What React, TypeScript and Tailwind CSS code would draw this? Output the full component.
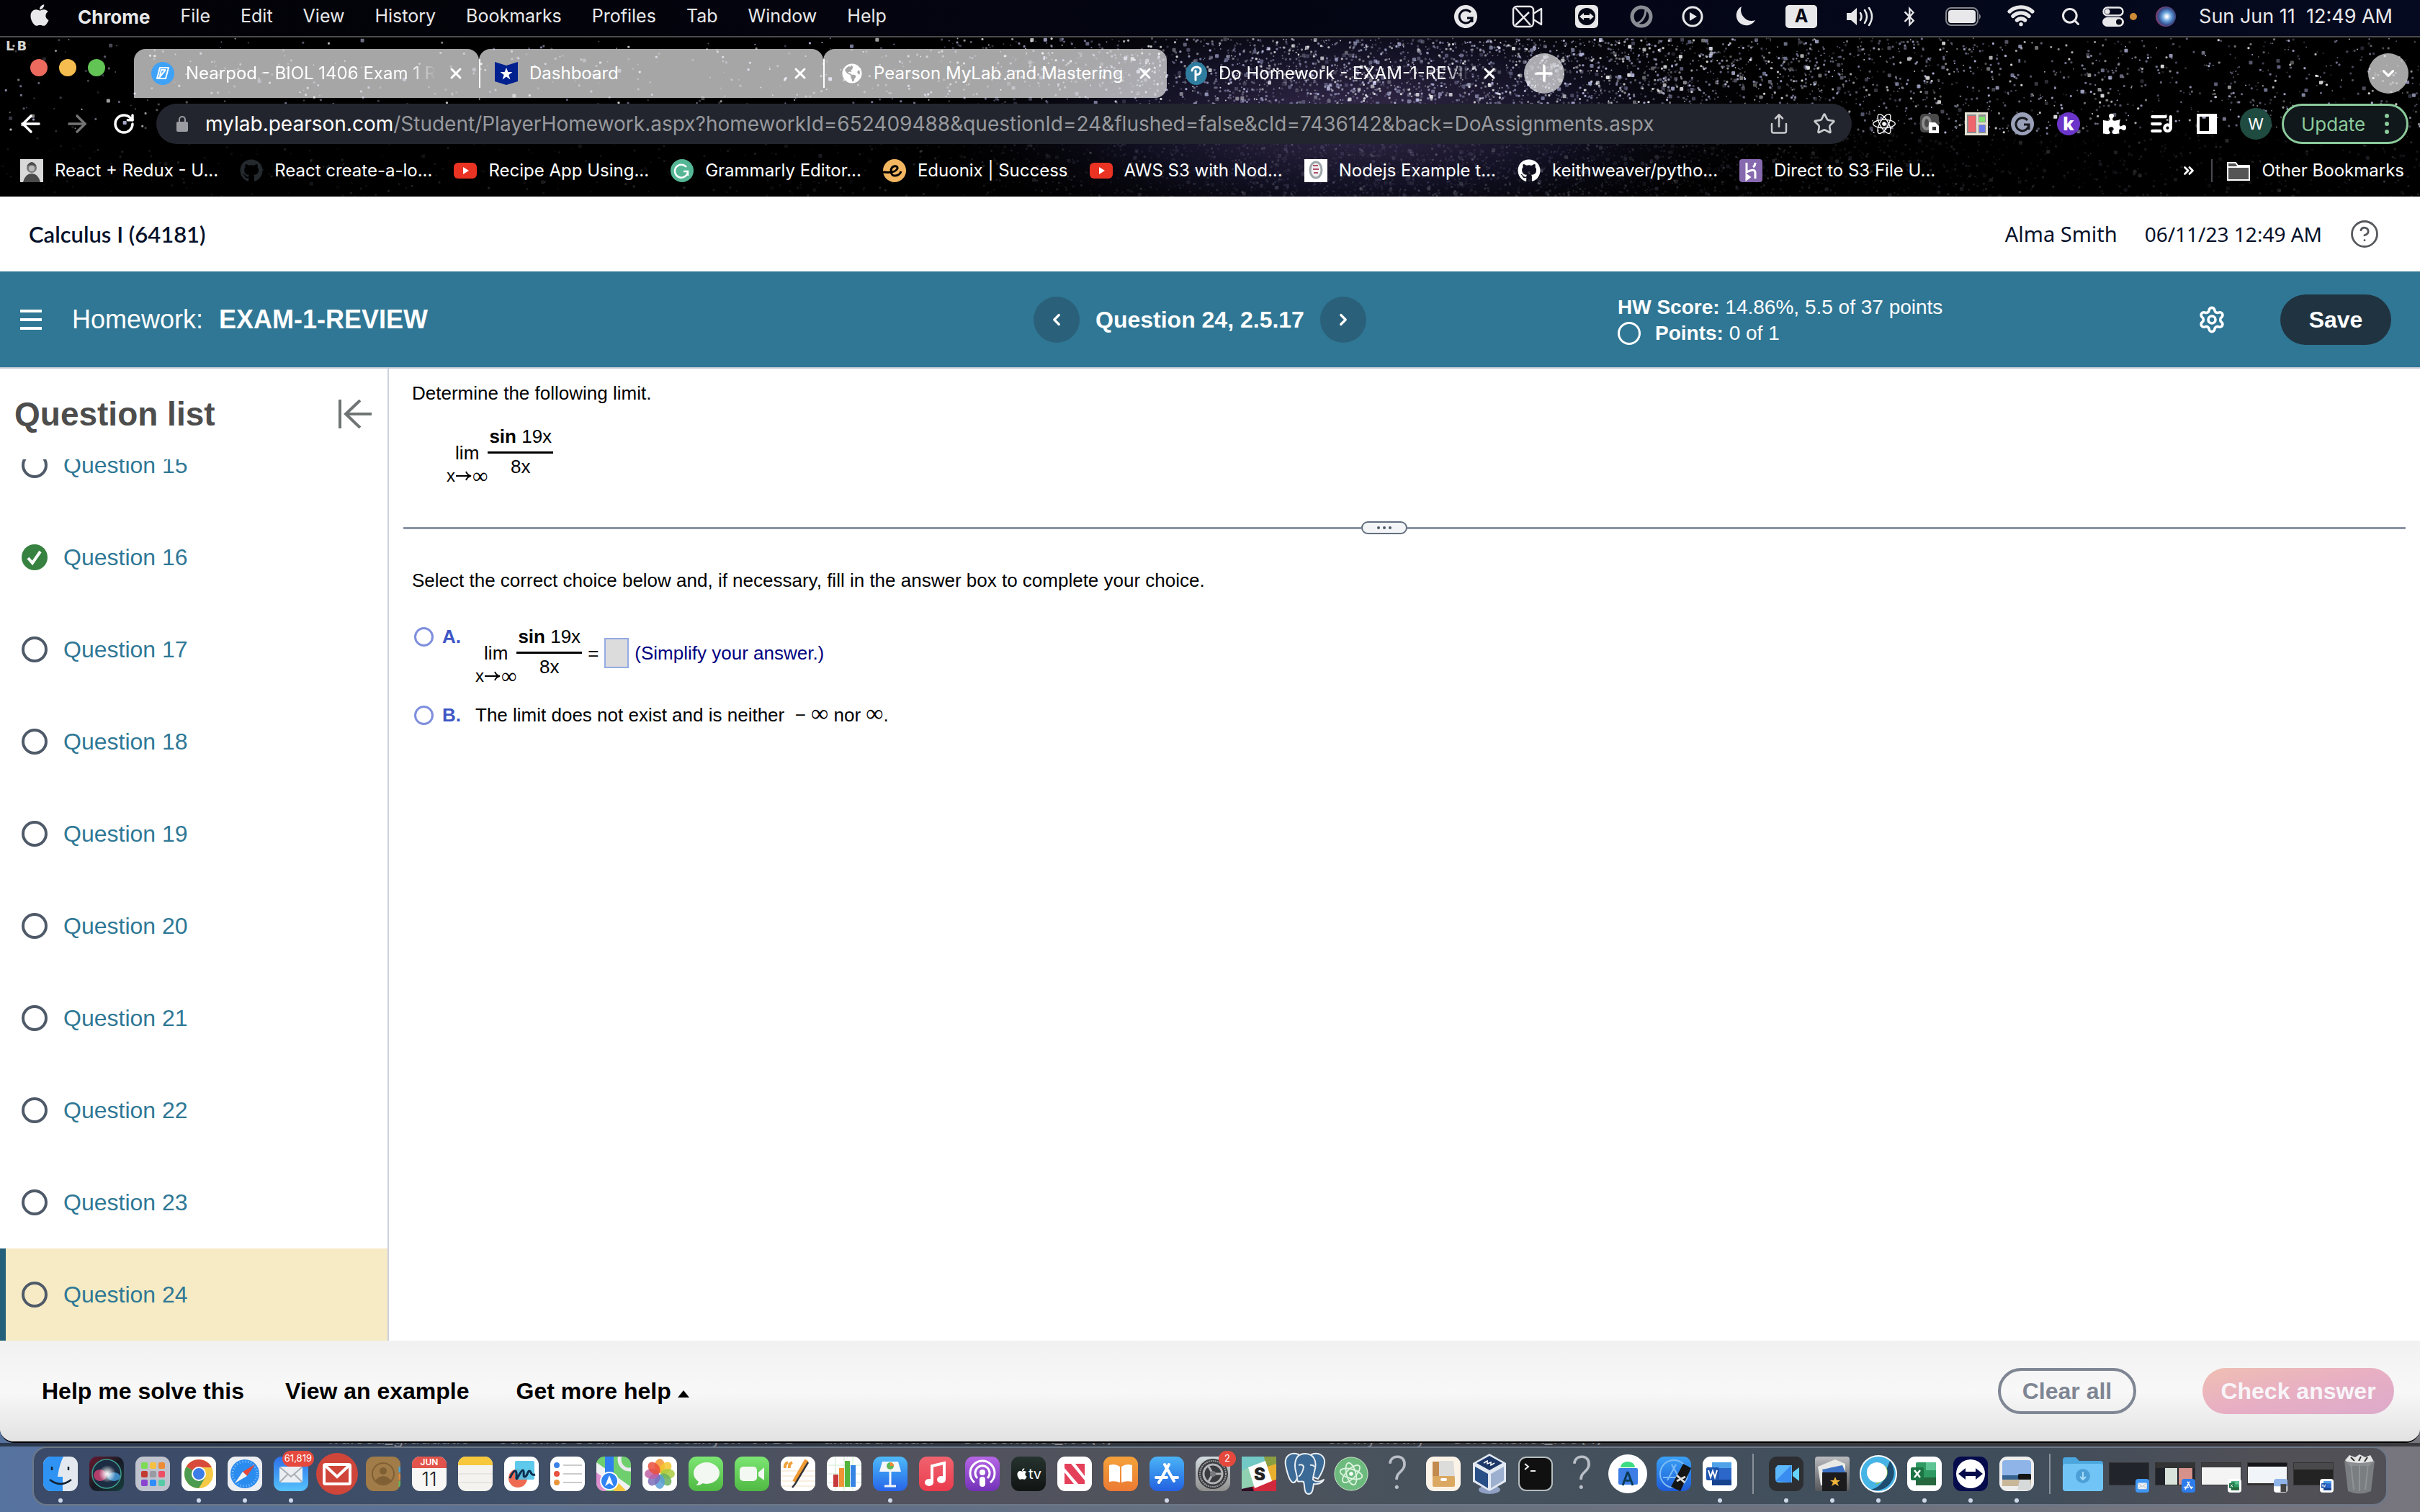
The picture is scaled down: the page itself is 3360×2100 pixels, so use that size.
import React from "react";
import {
  FaApple,
  FaBluetoothB,
  FaGithub,
  FaGlobeAmericas,
  FaPuzzlePiece,
  FaReact,
} from "react-icons/fa";
import {
  ArrowLeft,
  ArrowRight,
  ChevronDown,
  ChevronLeft,
  ChevronRight,
  ChevronsRight,
  CircleHelp,
  CirclePlay,
  ListMusic,
  Plus,
  RotateCw,
  Search,
  Settings,
  Share,
  Star,
  Wifi,
  X,
} from "lucide-react";

const seeded = (seed: number) => () => {
  seed = (seed * 16807) % 2147483647;
  return seed / 2147483647;
};

const rand = seeded(4217);
const gauss = () => (rand() + rand() + rand()) / 3;

const starX = (i: number) => {
  if (i % 5 === 0) return rand() * 100;
  if (i % 5 === 1) return 50 + rand() * 50;
  return 28 + gauss() * 64;
};

const stars = Array.from({ length: 8500 }, (_, i) => {
  const y = rand() * 100;
  const lower = y > 60;
  return {
    x: starX(i),
    y,
    size: rand() > 0.92 ? 5 : rand() > 0.4 ? 3 : 2,
    fill: ["#ffffff", "#c9ccf5", "#9092b8", "#77778a"][Math.floor(rand() * 4)],
    opacity: (lower ? 0.16 : 0.85) * (0.3 + rand() * 0.7),
  };
});

const Starfield = () => (
  <svg className="absolute inset-0 w-full h-full" aria-hidden="true">
    <defs>
      <radialGradient id="milky">
        <stop offset="0" stopColor="#4a3a68" stopOpacity="0.75" />
        <stop offset="0.5" stopColor="#1a1834" stopOpacity="0.65" />
        <stop offset="1" stopColor="#000000" stopOpacity="0" />
      </radialGradient>
    </defs>
    <ellipse cx="56%" cy="50%" rx="19%" ry="90%" fill="url(#milky)" />
    {stars.map((s, i) => (
      <rect
        key={i}
        x={`${s.x.toFixed(2)}%`}
        y={`${s.y.toFixed(2)}%`}
        width={s.size}
        height={s.size}
        rx="1"
        fill={s.fill}
        opacity={s.opacity.toFixed(2)}
      />
    ))}
  </svg>
);

/* ---------- macOS menu bar ---------- */

const menus = ["File", "Edit", "View", "History", "Bookmarks", "Profiles", "Tab", "Window", "Help"];

const MenuBar = () => (
  <header className="flex items-center justify-between h-[50px] pb-1 pl-[38px] pr-[38px] bg-linear-to-r from-[#020206] to-[#050a20] text-[#e8e8ea] text-[25px] shrink-0">
    <nav className="flex items-center gap-[42px]">
      <FaApple size={34} className="-mt-1 mr-[-6px]" />
      <button className="text-[26px] font-bold">Chrome</button>
      {menus.map((m) => (
        <button key={m}>{m}</button>
      ))}
    </nav>
    <div className="flex items-center gap-10">
      <span className="flex items-center justify-center w-8 h-8 mr-2 rounded-full bg-[#e8e8ea]">
        <svg width="24" height="24" viewBox="0 0 24 24" fill="none" stroke="#050816" strokeWidth="3">
          <path d="M19 6a9 9 0 1 0 2 8h-7M21 14v6" />
        </svg>
      </span>
      <svg width="44" height="32" viewBox="0 0 44 32" fill="none" stroke="#e8e8ea" strokeWidth="2.500" strokeLinejoin="round">
        <rect x="2" y="2" width="28" height="28" rx="5" />
        <path d="M30 12l11-7v22l-11-7M5 4l21 24M5 28L24 10" />
      </svg>
      <svg width="32" height="32" viewBox="0 0 32 32" className="ml-1">
        <rect width="32" height="32" rx="6" fill="#e8e8ea" />
        <circle cx="16" cy="16" r="12" fill="#050816" />
        <path d="M6 16l6-5v3h8v-3l6 5-6 5v-3h-8v3z" fill="#e8e8ea" />
      </svg>
      <svg width="32" height="32" viewBox="0 0 32 32" fill="none" stroke="#8b8d94" className="ml-1">
        <circle cx="16" cy="16" r="13" strokeWidth="5" />
        <path d="M9 26c8-3 13-10 13-21" strokeWidth="3" />
      </svg>
      <svg width="30" height="30" viewBox="0 0 30 30">
        <circle cx="15" cy="15" r="13" fill="none" stroke="#e8e8ea" strokeWidth="3" />
        <path d="M11 9l10 6-10 6z" fill="#e8e8ea" />
      </svg>
      <svg width="30" height="30" viewBox="0 0 30 30" className="ml-1">
        <path d="M9 1a14 14 0 1 0 19 19A15 15 0 0 1 9 1z" fill="#e8e8ea" />
      </svg>
      <span className="flex items-center justify-center w-11 h-8 rounded-[5px] bg-[#e8e8ea] text-[#050816] font-bold">A</span>
      <svg width="40" height="32" viewBox="0 0 40 32" fill="none" stroke="#e8e8ea" strokeWidth="2.500" strokeLinecap="round" className="mr-[-4px]">
        <path d="M1 11h6l8-7v24l-8-7H1z" fill="#e8e8ea" stroke="none" />
        <path d="M20 11q3 5 0 10M26 7q6 9 0 18M32 4q8 12 0 24" />
      </svg>
      <FaBluetoothB size={28} className="ml-[-2px] mr-[-4px]" />
      <svg width="50" height="26" viewBox="0 0 50 26" className="mr-[-4px]">
        <rect x="1" y="1" width="44" height="24" rx="7" fill="none" stroke="#84868d" strokeWidth="2" />
        <rect x="4" y="4" width="38" height="18" rx="4" fill="#e8e8ea" />
        <path d="M47 9q4 4 0 8z" fill="#84868d" />
      </svg>
      <Wifi size={38} strokeWidth={3.4} className="-mt-1 mr-[-4px]" />
      <Search size={28} strokeWidth={2.6} className="mr-[-10px]" />
      <div className="flex items-center gap-2">
        <svg width="30" height="28" viewBox="0 0 30 28">
          <rect x="1.500" y="1.500" width="27" height="11" rx="5.500" fill="none" stroke="#e8e8ea" strokeWidth="2.500" />
          <circle cx="7" cy="7" r="3.500" fill="#e8e8ea" />
          <rect y="15" width="30" height="13" rx="6.500" fill="#e8e8ea" />
          <circle cx="23" cy="21.500" r="4" fill="#050816" />
        </svg>
        <span className="w-[10px] h-[10px] mr-[-14px] rounded-full bg-[#cf8a36]" />
      </div>
      <span className="w-7 h-7 rounded-full bg-[radial-gradient(circle_at_55%_50%,#ffffff_5%,#6aa3dd_30%,#35508f_55%,#a8345f_80%,#2f8f80)] mr-[-8px]" />
      <time className="whitespace-pre text-[27px]">Sun Jun 11  12:49 AM</time>
    </div>
  </header>
);

/* ---------- browser chrome ---------- */

const Youtube = () => (
  <svg width="32" height="32" viewBox="0 0 32 32">
    <rect y="5" width="32" height="22" rx="6" fill="#ea3323" />
    <path d="M13 11l8 5-8 5z" fill="#fff" />
  </svg>
);

const TabTitle = ({ children, faded }: { children: React.ReactNode; faded?: boolean }) => (
  <span
    className={
      "flex-1 overflow-hidden whitespace-nowrap text-[24px] " +
      (faded ? "mask-[linear-gradient(to_right,black_90%,transparent)]" : "")
    }
  >
    {children}
  </span>
);

const TabStrip = () => (
  <div className="relative flex items-end h-[84px] text-white">
    <div className="absolute left-2 top-1 flex gap-1 font-['DejaVu_Sans',sans-serif] text-[18px] leading-4 font-bold text-[#d5d5d5]">
      <span>L</span>
      <span>B</span>
    </div>
    <div className="flex items-center gap-4 w-[186px] h-[68px] pl-[42px] pb-4">
      <button aria-label="Close window" className="w-6 h-6 rounded-full bg-[#ed6a5e]" />
      <button aria-label="Minimize" className="w-6 h-6 rounded-full bg-[#f5bd4f]" />
      <button aria-label="Zoom" className="w-6 h-6 rounded-full bg-[#61c454]" />
    </div>
    <div className="flex items-center gap-4 w-[479px] h-[68px] pl-6 pr-5 rounded-t-2xl bg-white/65">
      <svg width="32" height="32" viewBox="0 0 32 32">
        <circle cx="16" cy="16" r="16" fill="#3fa2f7" />
        <path d="M12 8h12l-4 15H8zM12 19l2-8h6M10 23l10-12" fill="none" stroke="#fff" strokeWidth="2" strokeLinejoin="round" />
      </svg>
      <TabTitle faded>Nearpod - BIOL 1406 Exam 1 R</TabTitle>
      <button aria-label="Close tab"><X size={24} strokeWidth={3} /></button>
    </div>
    <div className="flex items-center w-[478px] h-[68px] pr-5 rounded-t-2xl bg-white/65">
      <div className="w-[2px] h-10 mr-5 bg-white" />
      <div className="flex items-center gap-4 flex-1">
        <svg width="32" height="32" viewBox="0 0 32 32">
          <path d="M0 0l16 5L32 0v27l-16 5-16-5z" fill="#00208f" />
          <path d="M16 8l2.400 6h6l-5 4 2 6.500-5.400-4-5.400 4 2-6.500-5-4h6z" fill="#fff" />
        </svg>
        <TabTitle>Dashboard</TabTitle>
        <button aria-label="Close tab"><X size={24} strokeWidth={3} /></button>
      </div>
    </div>
    <div className="flex items-center w-[477px] h-[68px] pr-[18px] rounded-t-2xl rounded-br-2xl bg-white/65">
      <div className="w-[2px] h-10 mr-6 bg-white" />
      <div className="flex items-center gap-4 flex-1">
        <FaGlobeAmericas size={28} />
        <TabTitle>Pearson MyLab and Mastering</TabTitle>
        <button aria-label="Close tab"><X size={24} strokeWidth={3} /></button>
      </div>
    </div>
    <div className="flex items-center gap-4 w-[476px] h-[68px] pl-[26px] pr-4">
      <svg width="30" height="32" viewBox="0 0 30 32">
        <ellipse cx="15" cy="16" rx="15" ry="16" fill="#2f7d9f" />
        <path d="M9 12q1-5 7-5 6 1 5 6t-7 5M14 12v13" fill="none" stroke="#fff" strokeWidth="3" strokeLinecap="round" />
      </svg>
      <TabTitle faded>Do Homework - EXAM-1-REVIE</TabTitle>
      <button aria-label="Close tab"><X size={24} strokeWidth={3} /></button>
    </div>
    <div className="flex flex-1 items-center justify-between h-[68px] pl-5 pr-4">
      <button aria-label="New tab" className="flex items-center justify-center w-14 h-14 rounded-full bg-white/65">
        <Plus size={34} strokeWidth={2.6} />
      </button>
      <button aria-label="Search tabs" className="flex items-center justify-center w-14 h-14 rounded-full bg-white/65">
        <ChevronDown size={26} strokeWidth={3} />
      </button>
    </div>
  </div>
);

const Toolbar = () => (
  <div className="relative flex items-center h-[72px] pl-6 pr-4 text-white">
    <div className="flex items-center gap-[26px] w-[193px]">
      <button aria-label="Back"><ArrowLeft size={38} strokeWidth={2.2} /></button>
      <button aria-label="Forward"><ArrowRight size={38} strokeWidth={2.2} className="text-[#747474]" /></button>
      <button aria-label="Reload" className="ml-1"><RotateCw size={32} strokeWidth={2.6} /></button>
    </div>
    <div className="flex flex-1 items-center h-14 pl-7 pr-[22px] rounded-full bg-[#22252d]">
      <svg width="16" height="22" viewBox="0 0 16 22" className="mr-6">
        <rect y="8" width="16" height="14" rx="2" fill="#9a9ca1" />
        <path d="M4 9V5a4 4 0 0 1 8 0v4" fill="none" stroke="#9a9ca1" strokeWidth="2" />
      </svg>
      <div className="flex-1 text-[28px] whitespace-nowrap text-[#97999e]">
        <span className="text-white">mylab.pearson.com</span>
        /Student/PlayerHomework.aspx?homeworkId=652409488&questionId=24&flushed=false&cId=7436142&back=DoAssignments.aspx
      </div>
      <div className="flex gap-8 text-[#c9cacd]">
        <button aria-label="Share"><Share size={30} strokeWidth={2} /></button>
        <button aria-label="Bookmark"><Star size={32} strokeWidth={2} /></button>
      </div>
    </div>
    <div className="flex items-center gap-8 pl-[29px]">
      <FaReact size={32} />
      <svg width="32" height="32" viewBox="0 0 32 32">
        <rect x="2" y="2" width="26" height="26" rx="5" fill="#4a4a4a" />
        <ellipse cx="11" cy="15" rx="5" ry="8" fill="none" stroke="#8b8b8b" strokeWidth="4" />
        <path d="M14 14h9l5 5v10H14z" fill="#fff" />
        <rect x="19" y="20" width="5" height="5" fill="#333" />
      </svg>
      <svg width="32" height="32" viewBox="0 0 32 32">
        <rect width="32" height="32" fill="#e4e1d4" />
        <rect x="3" y="3" width="26" height="26" fill="#8d8d8d" />
        <rect x="5" y="5" width="10" height="22" fill="#f0656c" />
        <path d="M16 2h3v28h-3zM17 14h13v3H17z" fill="#e4e1d4" />
        <rect x="20" y="6" width="8" height="7" fill="#7ee36b" />
        <rect x="20" y="18" width="8" height="9" fill="#6b78ee" />
      </svg>
      <svg width="32" height="32" viewBox="0 0 32 32">
        <circle cx="16" cy="16" r="16" fill="#9aa0b8" />
        <path d="M23 11a9 9 0 1 0 2 6h-7M25 17v7" fill="none" stroke="#15171d" strokeWidth="3" />
      </svg>
      <span className="flex items-center justify-center w-8 h-8 rounded-full bg-[#6b35c9] text-[26px] leading-8 font-extrabold">k</span>
      <FaPuzzlePiece size={32} />
      <ListMusic size={34} strokeWidth={3} />
      <svg width="28" height="28" viewBox="0 0 28 28">
        <path d="M0 0h28v28H0zM4 4v20h13V4z" fill="#fff" fillRule="evenodd" />
      </svg>
      <span className="flex items-center justify-center w-11 h-11 rounded-full bg-[#1f4b41] text-[22px]">W</span>
      <button className="flex items-center justify-between w-44 h-14 px-6 ml-[-18px] border-[3px] border-[#8cca9b] rounded-full bg-[#10181b] text-[26px] text-[#8cca9b]">
        Update
        <svg width="6" height="28" viewBox="0 0 6 28" fill="#8cca9b">
          <circle cx="3" cy="3" r="3" />
          <circle cx="3" cy="14" r="3" />
          <circle cx="3" cy="25" r="3" />
        </svg>
      </button>
    </div>
  </div>
);

const bookmarks = [
  {
    label: "React + Redux - U...",
    icon: (
      <svg width="32" height="32" viewBox="0 0 32 32">
        <rect width="32" height="32" fill="#d9d9d9" />
        <circle cx="16" cy="12" r="7" fill="#777" />
        <path d="M9 10q7-12 14 0-7-4-14 0zM4 32q3-12 12-12t12 12z" fill="#4b4b4b" />
        <circle cx="16" cy="13" r="4" fill="#b9b9b9" />
      </svg>
    ),
  },
  { label: "React create-a-lo...", icon: <FaGithub size={32} className="text-[#24292e]" /> },
  { label: "Recipe App Using...", icon: <Youtube /> },
  {
    label: "Grammarly Editor...",
    icon: (
      <svg width="32" height="32" viewBox="0 0 32 32">
        <circle cx="16" cy="16" r="16" fill="#54b694" />
        <path d="M22 11a9 9 0 1 0 2 6h-6M24 17v6" fill="none" stroke="#fff" strokeWidth="2.500" />
      </svg>
    ),
  },
  {
    label: "Eduonix | Success",
    icon: (
      <svg width="32" height="32" viewBox="0 0 32 32">
        <circle cx="16" cy="16" r="16" fill="#f3b661" />
        <path d="M0 18q17 2 20-5c1-5-9-5-9 4 0 9 12 7 14 0" fill="none" stroke="#000" strokeWidth="3" />
      </svg>
    ),
  },
  { label: "AWS S3 with Nod...", icon: <Youtube /> },
  {
    label: "Nodejs Example t...",
    icon: (
      <svg width="32" height="32" viewBox="0 0 32 32">
        <rect width="32" height="32" fill="#fff" />
        <ellipse cx="16" cy="15" rx="8" ry="11" fill="#f0f0f2" stroke="#9fa6a9" strokeWidth="3" />
        <path d="M12 9h7M12 14h8M13 19h6" stroke="#b05068" strokeWidth="2" />
      </svg>
    ),
  },
  { label: "keithweaver/pytho...", icon: <FaGithub size={32} /> },
  {
    label: "Direct to S3 File U...",
    icon: (
      <svg width="32" height="32" viewBox="0 0 32 32">
        <rect width="32" height="32" rx="4" fill="#8769b0" />
        <path d="M10 5v13q12-6 12 1v8M22 5q0 4-3 6M10 22v6l4-3z" fill="none" stroke="#fff" strokeWidth="3" />
      </svg>
    ),
  },
];

const BookmarksBar = () => (
  <nav className="relative flex items-center justify-between h-[65px] pb-2 pl-7 pr-[22px] text-white text-[24px]">
    <div className="flex items-center gap-[30px]">
      {bookmarks.map((b) => (
        <a key={b.label} href="#" className="flex items-center gap-4 whitespace-nowrap">
          {b.icon}
          {b.label}
        </a>
      ))}
    </div>
    <div className="flex items-center gap-5">
      <button aria-label="More bookmarks"><ChevronsRight size={22} strokeWidth={3} /></button>
      <div className="w-[2px] h-8 bg-[#4b4b4f]" />
      <a href="#" className="flex items-center gap-4">
        <svg width="32" height="28" viewBox="0 0 32 28">
          <path d="M1 3h11l3 4h16v20H1z" fill="#555" stroke="#fff" strokeWidth="2" />
          <path d="M1 9h30" stroke="#fff" strokeWidth="2" />
        </svg>
        Other Bookmarks
      </a>
    </div>
  </nav>
);

/* ---------- homework player ---------- */

const Infinity = () => <span className="font-['Liberation_Serif',serif] text-[34px] leading-6">∞</span>;

const Limit = () => (
  <span className="inline-flex items-start">
    <span className="flex flex-col items-center pt-[25px] leading-7">
      <span>lim</span>
      <span className="flex items-center mt-1 text-[24px]">
        x
        <svg width="24" height="14" viewBox="0 0 24 14" fill="none" stroke="#000" strokeWidth="2">
          <path d="M1 7h20M15 1q2 5 7 6-5 1-7 6" />
        </svg>
        <span className="font-['Liberation_Serif',serif] text-[30px]">∞</span>
      </span>
    </span>
    <span className="flex flex-col items-center">
      <span className="px-[2px] pb-[5px] border-b-3 border-black leading-8">
        <b>sin</b> 19x
      </span>
      <span className="pt-[2px] leading-8">8x</span>
    </span>
  </span>
);

const questions = [15, 16, 17, 18, 19, 20, 21, 22, 23, 24];

const QuestionList = () => (
  <aside className="flex flex-col w-[540px] shrink-0 border-r-2 border-[#ced0de]">
    <div className="flex items-center justify-between h-[126px] shrink-0 pl-5 pr-[22px]">
      <h2 className="text-[46px] leading-[56px] font-bold text-[#4d4d4d]">Question list</h2>
      <button aria-label="Collapse question list">
        <svg width="46" height="40" viewBox="0 0 46 40" fill="none" stroke="#6f7474" strokeWidth="4">
          <path d="M2 0v40M46 20H10M30 1L10 20l20 19" />
        </svg>
      </button>
    </div>
    <ul className="flex flex-col flex-1 justify-end min-h-0 overflow-hidden">
      {questions.map((q) => (
        <li
          key={q}
          className={
            "flex items-center h-32 shrink-0 border-l-8 pl-[22px] " +
            (q === 24 ? "border-[#25607b] bg-[#f6ebc4]" : "border-transparent")
          }
        >
          <a href="#" className="flex items-center gap-[22px] text-[32px] text-[#2f7896]">
            {q === 16 ? (
              <svg width="36" height="36" viewBox="0 0 36 36">
                <circle cx="18" cy="18" r="18" fill="#378240" />
                <path d="M9 19l6 7 11-16" fill="none" stroke="#fff" strokeWidth="4" />
              </svg>
            ) : (
              <span className="w-9 h-9 border-4 border-[#4f5a69] rounded-full" />
            )}
            Question {q}
          </a>
        </li>
      ))}
    </ul>
  </aside>
);

const Radio = ({ letter }: { letter: string }) => (
  <label className="flex items-center gap-3 w-[88px] h-8 pl-[3px] font-bold text-[#3d56c5]">
    <input
      type="radio"
      name="choice"
      className="appearance-none w-[27px] h-[27px] border-[3px] border-[#7f8fdd] rounded-full bg-white"
    />
    {letter}.
  </label>
);

const Exercise = () => (
  <main className="flex-1 px-5 pt-[18px] text-[26px] leading-8 text-black">
    <div className="h-[194px] pl-3">
      <p>Determine the following limit.</p>
      <div className="pl-12 pt-7">
        <Limit />
      </div>
    </div>
    <div className="flex items-center h-[18px]">
      <div className="flex-[24] h-[3px] bg-[#8b93a5]" />
      <button aria-label="Resize panes" className="flex items-center justify-center gap-1 w-[64px] h-[18px] border-2 border-[#62707f] rounded-full bg-[#f4f5f7]">
        <span className="w-1 h-1 rounded-full bg-[#4d5a68]" />
        <span className="w-1 h-1 rounded-full bg-[#4d5a68]" />
        <span className="w-1 h-1 rounded-full bg-[#4d5a68]" />
      </button>
      <div className="flex-[25] h-[3px] bg-[#8b93a5]" />
    </div>
    <div className="pl-3 pt-12">
      <p>Select the correct choice below and, if necessary, fill in the answer box to complete your choice.</p>
      <div className="flex items-start pt-[46px]">
        <Radio letter="A" />
        <div className="flex items-start">
          <Limit />
          <div className="flex items-center h-[78px] gap-2 pl-2">
            <span>=</span>
            <input
              aria-label="Answer"
              readOnly
              className="w-[34px] h-[42px] border-2 border-[#94abe2] bg-[#dcdcdc]"
            />
            <span className="text-[#000080]">(Simplify your answer.)</span>
          </div>
        </div>
      </div>
      <div className="flex items-center pt-6">
        <Radio letter="B" />
        <p className="whitespace-pre">
          The limit does not exist and is neither  − <Infinity /> nor <Infinity />.
        </p>
      </div>
    </div>
  </main>
);

const CourseHeader = () => (
  <div className="flex items-center justify-between h-[104px] shrink-0 pl-10 pr-14 bg-white text-[#05112a]">
    <h1 className="font-['Lato',sans-serif] text-[31px] font-semibold">Calculus I (64181)</h1>
    <div className="flex items-center gap-[38px] font-['Noto_Sans',sans-serif] text-[29px]">
      <span>Alma Smith</span>
      <span className="text-[28px]">06/11/23 12:49 AM</span>
      <button aria-label="Help"><CircleHelp size={42} strokeWidth={1.6} className="text-[#55585c]" /></button>
    </div>
  </div>
);

const AssignmentBar = () => (
  <div className="grid grid-cols-[1435px_811px_1fr] items-center h-[135px] shrink-0 border-b-2 border-[#c8cbd8] bg-[#307795] text-white">
    <div className="flex items-center pl-7 text-[36px]">
      <button aria-label="Menu" className="flex flex-col gap-2 w-[30px] mr-[42px]">
        <span className="h-1 w-full bg-white" />
        <span className="h-1 w-full bg-white" />
        <span className="h-1 w-full bg-white" />
      </button>
      Homework:<b className="ml-[22px]">EXAM-1-REVIEW</b>
    </div>
    <div className="flex items-center gap-[22px]">
      <button aria-label="Previous question" className="flex items-center justify-center w-16 h-16 rounded-full bg-[#2a6079]">
        <ChevronLeft size={26} strokeWidth={3} />
      </button>
      <b className="text-[32px]">Question 24, 2.5.17</b>
      <button aria-label="Next question" className="flex items-center justify-center w-16 h-16 rounded-full bg-[#2a6079]">
        <ChevronRight size={26} strokeWidth={3} />
      </button>
    </div>
    <div className="flex items-center justify-between pr-10">
      <div className="text-[28px] leading-9 pt-[2px]">
        <p><b>HW Score:</b> 14.86%, 5.5 of 37 points</p>
        <p className="flex items-center">
          <span className="w-8 h-8 mr-5 border-[3px] border-white rounded-full" />
          <span><b>Points:</b> 0 of 1</span>
        </p>
      </div>
      <div className="flex items-center gap-[75px]">
        <button aria-label="Settings"><Settings size={40} strokeWidth={2.2} /></button>
        <button className="w-[154px] h-[70px] rounded-full bg-[#203341] text-[32px] font-bold">Save</button>
      </div>
    </div>
  </div>
);

const ActionBar = () => (
  <footer className="flex items-center justify-between h-[140px] shrink-0 pl-[58px] pr-9 bg-linear-to-b from-[#f1f1f1] via-[#f8f8f8] to-[#e2e2e2] text-[32px] font-bold text-black">
    <div className="flex items-center">
      <button className="mr-[57px]">Help me solve this</button>
      <button className="mr-[65px]">View an example</button>
      <button className="flex items-center gap-[9px]">
        Get more help
        <svg width="16" height="10" viewBox="0 0 16 10" className="mt-2"><path d="M0 10L8 0l8 10z" /></svg>
      </button>
    </div>
    <div className="flex items-center gap-[92px]">
      <button className="w-48 h-16 border-4 border-[#7f8693] rounded-full text-[#7f8693]">Clear all</button>
      <button className="w-[266px] h-16 rounded-full bg-linear-to-br from-[#f0bfb2] via-[#e8afc3] to-[#dcaacb] text-[#f8f5f9]">
        Check answer
      </button>
    </div>
  </footer>
);

/* ---------- dock ---------- */

const Tile = ({ children, className = "bg-white" }: { children?: React.ReactNode; className?: string }) => (
  <span className={"flex items-center justify-center w-12 h-12 rounded-[11px] overflow-hidden " + className}>
    {children}
  </span>
);

const Art = ({ children }: { children: React.ReactNode }) => (
  <svg width="48" height="48" viewBox="0 0 48 48" className="shrink-0">
    {children}
  </svg>
);

const Badge = ({ children }: { children: React.ReactNode }) => (
  <span className="absolute right-0 -top-2 flex items-center justify-center min-w-6 h-[22px] px-[3px] rounded-full bg-[#e5493d] text-white text-[13px]">
    {children}
  </span>
);

const Missing = () => (
  <span className="font-['Roboto',sans-serif] text-[64px] leading-[48px] font-light text-[#b9bec6]">?</span>
);

const Thumb = ({ tone, children }: { tone: string; children: React.ReactNode }) => (
  <span className="relative flex w-14 h-12 items-center">
    <span className={"w-14 h-8 border border-[#333] " + tone} />
    <span className="absolute right-0 -bottom-[2px] w-[19px] h-[19px] rounded-[4px] overflow-hidden">{children}</span>
  </span>
);

const launchpadColors = ["#7ddb55", "#f6c042", "#ee8b33", "#c33a33", "#9a9aa2", "#ee4d63", "#8a44cf", "#2f8df7", "#56cba5"];
const petals = ["#f6952d", "#f3c62e", "#a9cb3f", "#68b25f", "#5a9fd8", "#7d6cb8", "#c05fa5", "#ea4f3b"];

const Envelope = () => (
  <g>
    <rect x="8" y="14" width="32" height="22" rx="3" fill="#eceff2" />
    <path d="M9 15l15 13 15-13M9 35l11-11M39 35L28 24" fill="none" stroke="#a9afb5" strokeWidth="2" />
  </g>
);

const AppStoreMark = () => (
  <g stroke="#fff" strokeWidth="4" strokeLinecap="round" fill="none">
    <path d="M27 11L15 33M21 11l13 23M9 29h15M31 29h8M13 36l1-2" />
  </g>
);

const Sheets = () => (
  <g>
    <rect x="12" y="8" width="28" height="32" rx="2" fill="#2f9b63" />
    <path d="M26 8h14v11H26z" fill="#5fc493" />
    <path d="M12 29h28v11H12z" fill="#27683f" />
    <rect x="5" y="15" width="18" height="18" rx="2" fill="#1c7343" />
    <path d="M10 19l8 10M18 19l-8 10" stroke="#fff" strokeWidth="2.500" />
  </g>
);

const WordMark = () => (
  <g>
    <rect x="13" y="8" width="27" height="32" rx="2" fill="#2b67c9" />
    <path d="M13 8h27v8H13z" fill="#4fa2e8" />
    <path d="M13 32h27v8H13z" fill="#17438f" />
    <rect x="5" y="15" width="18" height="18" rx="2" fill="#1d54ad" />
    <path d="M8 19l3 10 3-9 3 9 3-10" fill="none" stroke="#fff" strokeWidth="2" />
  </g>
);

type DockApp = { name: string; icon: React.ReactNode; running?: boolean; badge?: string };

const apps: DockApp[] = [
  {
    name: "Finder",
    running: true,
    icon: (
      <Tile className="bg-[#e4e9f0]">
        <Art>
          <path d="M0 0h28q-6 12-8 28h7v20H0z" fill="#2f93f3" />
          <path d="M12 14v5M35 14v5" stroke="#123" strokeWidth="2.500" />
          <path d="M9 32q15 12 30 0" fill="none" stroke="#123" strokeWidth="2.500" />
        </Art>
      </Tile>
    ),
  },
  {
    name: "Siri",
    icon: (
      <Tile className="bg-linear-to-br from-[#6b1030] via-[#171a24] to-[#123f3d]">
        <Art>
          <defs>
            <radialGradient id="siriGlow">
              <stop offset="0" stopColor="#fff" />
              <stop offset="0.35" stopColor="#fff" stopOpacity="0.7" />
              <stop offset="1" stopColor="#fff" stopOpacity="0" />
            </radialGradient>
          </defs>
          <circle cx="24" cy="24" r="20" fill="#1c2c42" stroke="#3d9c8c" strokeWidth="1.500" />
          <ellipse cx="15" cy="26" rx="9" ry="8" fill="#d64474" opacity=".8" />
          <ellipse cx="34" cy="28" rx="9" ry="6" fill="#47a3e2" opacity=".8" />
          <ellipse cx="25" cy="24" rx="12" ry="12" fill="url(#siriGlow)" />
        </Art>
      </Tile>
    ),
  },
  {
    name: "Launchpad",
    icon: (
      <Tile className="bg-[#bfc3cd]">
        <Art>
          {launchpadColors.map((c, i) => (
            <rect key={c} x={8 + (i % 3) * 12} y={8 + Math.floor(i / 3) * 12} width="9" height="9" rx="2" fill={c} />
          ))}
        </Art>
      </Tile>
    ),
  },
  {
    name: "Chrome",
    running: true,
    icon: (
      <Tile>
        <Art>
          <circle cx="24" cy="24" r="20" fill="#f6c944" />
          <path d="M24 24L6.700 14a20 20 0 0 1 34.600 0L42 15H24z" fill="#d84a3b" />
          <path d="M24 24L6.700 14A20 20 0 0 0 24 44l9-15z" fill="#4c9b51" />
          <circle cx="24" cy="24" r="10" fill="#fff" />
          <circle cx="24" cy="24" r="8" fill="#3d7de8" />
        </Art>
      </Tile>
    ),
  },
  {
    name: "Safari",
    running: true,
    icon: (
      <Tile className="bg-[#eceef1]">
        <Art>
          <circle cx="24" cy="24" r="20" fill="#2b8cf0" />
          <circle cx="24" cy="24" r="17" fill="none" stroke="#8cc4fa" strokeWidth="3" strokeDasharray="1 3" />
          <path d="M38 11L21 21l6 6z" fill="#e5473b" />
          <path d="M10 37l11-16 6 6z" fill="#f2f2f2" />
        </Art>
      </Tile>
    ),
  },
  {
    name: "Mail",
    running: true,
    badge: "61,819",
    icon: <Tile className="bg-linear-to-b from-[#2f6fea] to-[#57c2fb]"><Art><Envelope /></Art></Tile>,
  },
  {
    name: "Gmail",
    icon: (
      <svg width="58" height="58" viewBox="0 0 58 58" className="-mx-[5px] -my-[5px] shrink-0">
        <circle cx="29" cy="29" r="29" fill="#d0453a" />
        <rect x="11" y="16" width="36" height="27" rx="2" fill="none" stroke="#fff" strokeWidth="4" />
        <path d="M13 18l16 15 16-15" fill="none" stroke="#fff" strokeWidth="4" />
      </svg>
    ),
  },
  {
    name: "Contacts",
    icon: (
      <Tile className="bg-[#a17c48]">
        <Art>
          <circle cx="24" cy="24" r="15" fill="none" stroke="#7f5f34" strokeWidth="2" />
          <circle cx="24" cy="20" r="5" fill="#7f5f34" />
          <path d="M13 33q11-12 22 0-11 10-22 0z" fill="#7f5f34" />
          <path d="M47 14v8" stroke="#4aa5d8" strokeWidth="3" />
          <path d="M47 24v8" stroke="#e08a3c" strokeWidth="3" />
          <path d="M47 34v8" stroke="#62b65a" strokeWidth="3" />
        </Art>
      </Tile>
    ),
  },
  {
    name: "Calendar",
    icon: (
      <Tile className="flex-col bg-[#f8f7f5] justify-start!">
        <span className="w-full h-4 bg-[#e2544b] text-center text-[12px] leading-4 font-semibold text-white">JUN</span>
        <span className="text-[27px] leading-8 font-light text-[#222]">11</span>
      </Tile>
    ),
  },
  {
    name: "Notes",
    icon: (
      <Tile className="bg-[#f4f3ef]">
        <Art>
          <path d="M0 0h48v12H0z" fill="#f7c83c" />
          <path d="M0 24h48M0 36h48" stroke="#d8d7d2" />
        </Art>
      </Tile>
    ),
  },
  {
    name: "Freeform",
    icon: (
      <Tile>
        <Art>
          <circle cx="19" cy="30" r="13" fill="#ef6a51" />
          <rect x="15" y="6" width="27" height="26" rx="2" fill="#4cc3e8" opacity=".9" />
          <path d="M8 30c6-14 10-12 9-2s6-10 9-9-1 10 3 9 3-8 6-8 1 7 8 5" fill="none" stroke="#0d2d4d" strokeWidth="3" />
        </Art>
      </Tile>
    ),
  },
  {
    name: "Reminders",
    icon: (
      <Tile>
        <Art>
          <circle cx="9" cy="12" r="4" fill="#3b82e8" />
          <circle cx="9" cy="24" r="4" fill="#e8503f" />
          <circle cx="9" cy="36" r="4" fill="#e9963b" />
          <path d="M18 12h26M18 24h26M18 36h26" stroke="#ccc" strokeWidth="2" />
        </Art>
      </Tile>
    ),
  },
  {
    name: "Maps",
    icon: (
      <Tile className="bg-[#6fce6e]">
        <Art>
          <path d="M0 18l14 10v20H0z" fill="#dd8fd0" />
          <path d="M0 8l48 34v6H36L0 22z" fill="#f1f2f4" />
          <path d="M26 32l16 16H24z" fill="#f4c63e" />
          <circle cx="46" cy="4" r="14" fill="none" stroke="#e8e9ec" strokeWidth="5" />
          <path d="M12 0h12v26H12z" fill="#2f7fee" />
          <circle cx="18" cy="34" r="12" fill="#2f83f4" stroke="#fff" strokeWidth="2" />
          <path d="M18 26l6 15-6-4-6 4z" fill="#fff" />
        </Art>
      </Tile>
    ),
  },
  {
    name: "Photos",
    icon: (
      <Tile>
        <Art>
          {petals.map((c, i) => (
            <ellipse key={c} cx="24" cy="13" rx="7" ry="10" fill={c} opacity=".85" transform={`rotate(${i * 45} 24 24)`} />
          ))}
        </Art>
      </Tile>
    ),
  },
  {
    name: "Messages",
    icon: (
      <Tile className="bg-linear-to-b from-[#7ce672] to-[#4fb943]">
        <Art>
          <ellipse cx="25" cy="23" rx="18" ry="15" fill="#f3f8f2" />
          <path d="M14 33q0 5-4 7 7 0 11-4z" fill="#f3f8f2" />
        </Art>
      </Tile>
    ),
  },
  {
    name: "FaceTime",
    icon: (
      <Tile className="bg-linear-to-b from-[#7ce672] to-[#4fb943]">
        <Art>
          <rect x="7" y="14" width="24" height="20" rx="5" fill="#f3f8f2" />
          <path d="M33 22l8-7v18l-8-6z" fill="#f3f8f2" />
        </Art>
      </Tile>
    ),
  },
  {
    name: "Pages",
    icon: (
      <Tile>
        <Art>
          <path d="M0 20h48M0 27h48M0 34h48M0 41h48" stroke="#f5dfc3" />
          <path d="M6 16q-1-6 4-8M12 16q-1-6 4-8" fill="none" stroke="#f0a13b" strokeWidth="4" />
          <path d="M36 5L19 35" stroke="#ef9a33" strokeWidth="6" />
          <path d="M38 8L20 38l-4 5" fill="none" stroke="#33363b" strokeWidth="2.500" />
        </Art>
      </Tile>
    ),
  },
  {
    name: "Numbers",
    icon: (
      <Tile>
        <Art>
          <path d="M0 12h48M0 24h48M0 36h48M12 0v48M24 0v48M36 0v48" stroke="#cdeacb" />
          <rect x="9" y="25" width="7" height="17" fill="#c8393b" />
          <rect x="17" y="16" width="7" height="26" fill="#ee9434" />
          <rect x="25" y="6" width="7" height="36" fill="#53b53c" />
          <rect x="33" y="12" width="7" height="30" fill="#3584e4" />
        </Art>
      </Tile>
    ),
  },
  {
    name: "Keynote",
    running: true,
    icon: (
      <Tile className="bg-linear-to-b from-[#4fb9f8] to-[#2a63e8]">
        <Art>
          <path d="M13 7h22l4 14H9z" fill="#f4f6f8" />
          <circle cx="24" cy="13" r="5" fill="#5fb75a" />
          <path d="M24 13V8a5 5 0 0 1 5 5z" fill="#ef8a35" />
          <path d="M24 21v19M16 41h16" stroke="#f4f6f8" strokeWidth="3" />
        </Art>
      </Tile>
    ),
  },
  {
    name: "Music",
    icon: (
      <Tile className="bg-linear-to-b from-[#f0626f] to-[#ea3a4c]">
        <Art>
          <path d="M18 36V13l17-4v22" fill="none" stroke="#fff" strokeWidth="4" />
          <ellipse cx="14" cy="36" rx="6" ry="5" fill="#fff" />
          <ellipse cx="31" cy="32" rx="6" ry="5" fill="#fff" />
        </Art>
      </Tile>
    ),
  },
  {
    name: "Podcasts",
    icon: (
      <Tile className="bg-linear-to-b from-[#b765e6] to-[#7331b8]">
        <Art>
          <path d="M13 36a17 17 0 1 1 22 0M17 30a10 10 0 1 1 14 0" fill="none" stroke="#fff" strokeWidth="3" />
          <circle cx="24" cy="22" r="4" fill="#fff" />
          <rect x="20" y="28" width="8" height="14" rx="4" fill="#fff" />
        </Art>
      </Tile>
    ),
  },
  {
    name: "TV",
    icon: (
      <Tile className="bg-linear-to-b from-[#26332f] to-[#101413] text-[20px] text-white">
        <FaApple size={18} />tv
      </Tile>
    ),
  },
  {
    name: "News",
    icon: (
      <Tile>
        <Art>
          <path d="M10 10h9l19 23v5h-9L10 16z" fill="#e5405a" />
          <path d="M25 10h13v17zM10 22v16h13z" fill="#e5405a" />
        </Art>
      </Tile>
    ),
  },
  {
    name: "Books",
    icon: (
      <Tile className="bg-linear-to-b from-[#f4a13a] to-[#ec7a33]">
        <Art>
          <path d="M23 14q-7-5-15-2v23q8-2 15 1zM25 14q7-5 15-2v23q-8-2-15 1z" fill="#fff" />
        </Art>
      </Tile>
    ),
  },
  {
    name: "App Store",
    running: true,
    icon: <Tile className="bg-linear-to-b from-[#4cb3f6] to-[#2660e0]"><Art><AppStoreMark /></Art></Tile>,
  },
  {
    name: "System Settings",
    badge: "2",
    icon: (
      <Tile className="bg-linear-to-b from-[#d3dce1] to-[#8f8f8d]">
        <Art>
          <circle cx="24" cy="24" r="21" fill="#3b3c3f" />
          <circle cx="24" cy="24" r="18" fill="none" stroke="#9a9c9f" strokeWidth="2" strokeDasharray="2 1" />
          <circle cx="24" cy="24" r="13" fill="none" stroke="#b2b4b6" strokeWidth="3" />
          <path d="M24 24h13M24 24L17 12M24 24l-7 12" stroke="#b2b4b6" strokeWidth="3" />
          <circle cx="24" cy="24" r="4" fill="#77797c" />
        </Art>
      </Tile>
    ),
  },
  {
    name: "Slack",
    icon: (
      <Tile className="rounded-none! bg-[#72c8c4]">
        <Art>
          <path d="M31 0h17v12l-14 4z" fill="#8a9e41" />
          <path d="M48 10v26l-8 2-7-23z" fill="#e9b030" />
          <path d="M48 32v16H16l-2-6z" fill="#d0283c" />
          <path d="M0 44l14-4 3 8H0z" fill="#2f0d25" />
          <path d="M0 20l10-5 8 26-18 4z" fill="#8fd1b0" />
          <path d="M9 15l24-9 9 28-24 10z" fill="#fff" />
          <text x="25" y="33" textAnchor="middle" fontSize="24" fontWeight="900" fill="#222">S</text>
        </Art>
      </Tile>
    ),
  },
  {
    name: "PostgreSQL",
    icon: (
      <svg width="58" height="60" viewBox="0 0 58 60" className="-mx-[5px] -my-[6px] shrink-0" fill="#3b6a96" stroke="#e9eef3" strokeWidth="2" strokeLinejoin="round">
        <path d="M20 3C8-1 0 6 2 18c2 10 5 22 10 24 4 1 5-4 7-8z" />
        <path d="M38 3c10-4 19 2 18 12-1 9-5 16-9 22l-8-3z" />
        <path d="M29 2c12 0 16 10 14 20-1 6-3 10-3 16 4 4 10 3 15 0-2 5-9 7-14 6-1 5-1 14-7 14-7 0-5-10-7-17-5-2-9 3-9-5 0-5-3-10-3-17 0-11 5-17 14-17z" />
        <path d="M20 18q5-2 7 2-1 9-7 14M36 18q4-1 6 2" fill="none" />
      </svg>
    ),
  },
  {
    name: "Atom",
    icon: (
      <svg width="52" height="52" viewBox="0 0 52 52" className="-mx-[2px]">
        <circle cx="26" cy="26" r="25" fill="#6dba7e" stroke="#d5f0d0" strokeWidth="1" />
        <g fill="none" stroke="#d9f3dd" strokeWidth="2">
          <ellipse cx="26" cy="26" rx="17" ry="7" transform="rotate(75 26 26)" />
          <ellipse cx="26" cy="26" rx="17" ry="7" transform="rotate(15 26 26)" />
          <ellipse cx="26" cy="26" rx="17" ry="7" transform="rotate(-45 26 26)" />
        </g>
        <circle cx="26" cy="26" r="3" fill="#fff" />
      </svg>
    ),
  },
  { name: "Missing app", icon: <Missing /> },
  {
    name: "Archive",
    icon: (
      <Tile className="bg-[#fbf3e8]">
        <Art>
          <rect x="9" y="7" width="12" height="24" fill="#c28a4e" />
          <path d="M18 6h20l2 22H18z" fill="#dcdcdb" />
          <rect x="9" y="27" width="31" height="15" rx="2" fill="#dba862" />
          <rect x="20" y="30" width="9" height="4" rx="2" fill="#fff" />
        </Art>
      </Tile>
    ),
  },
  {
    name: "VirtualBox",
    icon: (
      <svg width="50" height="58" viewBox="0 0 50 58" className="-mx-[1px] -my-[5px] shrink-0">
        <ellipse cx="25" cy="51" rx="15" ry="6" fill="#8fa0c4" />
        <path d="M25 1l23 13v26L25 53 2 40V14z" fill="#e3e9f2" />
        <path d="M25 4l18 10-18 10L7 14z" fill="#1c3768" />
        <path d="M5 19l18 10v20L5 38z" fill="#284f86" />
        <path d="M45 19L27 29v20l18-11z" fill="#9db0cf" />
        <path d="M17 14l5-3v4l5-2v4l5-3" fill="none" stroke="#fff" strokeWidth="1.500" />
      </svg>
    ),
  },
  {
    name: "Terminal",
    icon: (
      <Tile className="border-2 border-[#b5bdbf] bg-[#101010]">
        <Art>
          <path d="M9 10l5 4-5 4M17 20h7" fill="none" stroke="#eee" strokeWidth="2" />
        </Art>
      </Tile>
    ),
  },
  { name: "Missing app 2", icon: <Missing /> },
  {
    name: "Android Studio",
    icon: (
      <svg width="54" height="54" viewBox="0 0 54 54" className="-mx-[3px] -my-[3px] shrink-0">
        <circle cx="27" cy="27" r="27" fill="#fff" />
        <rect x="14" y="19" width="27" height="23" rx="2" fill="#3c7de6" />
        <path d="M17 18a10 8 0 0 1 20 0z" fill="#3ddc84" />
        <path d="M27 24l-7 19M27 24l7 19M22 35q5 3 10 0" fill="none" stroke="#0b3a53" strokeWidth="3" />
      </svg>
    ),
  },
  {
    name: "Simulator",
    icon: (
      <Tile className="bg-linear-to-b from-[#3ba0f4] to-[#1f5bd8]">
        <Art>
          <g fill="none" stroke="#7dbcf8" strokeWidth="2">
            <circle cx="24" cy="24" r="19" />
            <path d="M27 11L15 33M21 11l10 18M9 29h20" />
          </g>
          <path d="M37 10l11 6-15 32-13-6z" fill="#141414" />
          <path d="M28 26l11 10M40 28l-12 6" stroke="#ddd" strokeWidth="3" />
        </Art>
      </Tile>
    ),
  },
  { name: "Word", running: true, icon: <Tile><Art><WordMark /></Art></Tile> },
];

const recents: DockApp[] = [
  {
    name: "Zoom",
    running: true,
    icon: (
      <Tile className="bg-[#2d2e31]">
        <Art>
          <path d="M12 12h20v24H14q-5 0-5-6V16z" fill="#5cb8fb" />
          <path d="M9 34l22-22v24z" fill="#3a8df0" />
          <path d="M33 22l9-7v19l-9-7z" fill="#67d3fb" />
        </Art>
      </Tile>
    ),
  },
  {
    name: "Photo Theater",
    running: true,
    icon: (
      <Tile className="rounded-[4px]! bg-linear-to-b from-[#b9bbbe] to-[#55575a]">
        <Art>
          <path d="M4 14l24-10 14 6v30H8z" fill="#e9e9e6" />
          <path d="M10 18l28-6 6 14H12z" fill="#3d73c4" />
          <rect x="10" y="22" width="34" height="26" fill="#1b1b1d" />
          <path d="M28 28l2 5h5l-4 3 2 5-5-3-5 3 2-5-4-3h5z" fill="#f0b53c" />
        </Art>
      </Tile>
    ),
  },
  {
    name: "Webex",
    running: true,
    icon: (
      <svg width="52" height="52" viewBox="0 0 52 52" className="-mx-[2px] -my-[2px] shrink-0">
        <circle cx="26" cy="26" r="25" fill="#47b4e6" stroke="#fff" strokeWidth="2" />
        <path d="M42 8a25 25 0 0 1-26 40q20-6 22-30z" fill="#1d4d70" />
        <path d="M36 14q10 18-14 27z" fill="#7cbb57" />
        <circle cx="24" cy="24" r="14" fill="#fff" />
      </svg>
    ),
  },
  { name: "Excel", running: true, icon: <Tile><Art><Sheets /></Art></Tile> },
  {
    name: "TeamViewer",
    running: true,
    icon: (
      <Tile className="bg-[#060b4c]">
        <Art>
          <circle cx="24" cy="24" r="20" fill="#fff" />
          <path d="M7 24l10-8v5h14v-5l10 8-10 8v-5H17v5z" fill="#060b4c" />
        </Art>
      </Tile>
    ),
  },
  {
    name: "Preview",
    running: true,
    icon: (
      <Tile className="bg-[#eeeeee]">
        <Art>
          <rect x="4" y="5" width="40" height="36" rx="4" fill="#8fb4e8" />
          <path d="M4 26h40v8H4z" fill="#35628f" />
          <path d="M4 32h40v9H4z" fill="#c9b79a" />
          <rect x="26" y="24" width="18" height="8" rx="2" fill="#151515" />
          <path d="M28 32h14l3 15H25z" fill="#d7dadb" />
        </Art>
      </Tile>
    ),
  },
];

const DockItem = ({ app }: { app: DockApp }) => (
  <button aria-label={app.name} className="relative flex flex-col items-center justify-center w-16 h-12 shrink-0">
    {app.icon}
    {app.badge && <Badge>{app.badge}</Badge>}
    {app.running && <span className="absolute -bottom-4 w-[6px] h-[6px] rounded-full bg-[#cfd8ea]" />}
  </button>
);

const Mini = ({ className = "bg-white", children }: { className?: string; children: React.ReactNode }) => (
  <svg width="19" height="19" viewBox="0 0 48 48" className={className}>
    {children}
  </svg>
);

const minimized = [
  {
    tone: "bg-[#22242b]",
    mini: <Mini className="bg-[#3f97f3]"><Envelope /></Mini>,
  },
  {
    tone: "bg-[linear-gradient(90deg,#20232a_25%,#d9e3dc_25%_55%,#20232a_55%_60%,#d6918b_60%_95%,#20232a_95%)] border-t-8!",
    mini: <Mini className="bg-[#2d7cec]"><AppStoreMark /></Mini>,
  },
  {
    tone: "bg-[linear-gradient(#3d3d3f_20%,#f4f4f4_20%)]",
    mini: <Mini><Sheets /></Mini>,
  },
  {
    tone: "bg-[linear-gradient(#15161c_18%,#f1f4f8_18%_92%,#333_92%)]",
    mini: (
      <Mini>
        <rect width="48" height="26" fill="#8fb4e8" />
        <rect x="24" y="18" width="20" height="28" fill="#444" />
      </Mini>
    ),
  },
  {
    tone: "bg-[linear-gradient(#4a4a4c_30%,#232323_30%)]",
    mini: <Mini><WordMark /></Mini>,
  },
];

const DockShelf = () => (
  <div className="flex items-center justify-center h-[82px] mx-[45px] pb-[6px] rounded-[20px] border-2 border-[#6d7888] bg-[linear-gradient(90deg,#3a4a68,#3f4f68_20%,#51525d_35%,#50525c_48%,#46525d_60%,#3f4d5b_84%,#515057_95%)]">
    {apps.map((a) => (
      <DockItem key={a.name} app={a} />
    ))}
    <div className="w-[2px] h-14 mx-[13px] bg-[#88909b]" />
    {recents.map((a) => (
      <DockItem key={a.name} app={a} />
    ))}
    <div className="w-[2px] h-14 mx-[13px] bg-[#88909b]" />
    <button aria-label="Downloads" className="flex justify-center w-16 shrink-0">
      <svg width="56" height="48" viewBox="0 0 56 48">
        <path d="M0 5q0-4 4-4h14l5 5h29q4 0 4 4v10H0z" fill="#4aa6dd" />
        <rect y="10" width="56" height="38" rx="4" fill="#71c5f6" />
        <circle cx="28" cy="27" r="10" fill="#4b9fd6" />
        <path d="M28 21v11M24 28l4 4 4-4" fill="none" stroke="#a6dcfa" strokeWidth="2" />
      </svg>
    </button>
    {minimized.map((m, i) => (
      <span key={i} className="flex justify-center w-16 shrink-0">
        <Thumb tone={m.tone}>{m.mini}</Thumb>
      </span>
    ))}
    <button aria-label="Trash" className="flex justify-center w-16 shrink-0">
      <svg width="44" height="56" viewBox="0 0 44 56">
        <path d="M2 9l6-7 8 3 6-4 8 4 7-3 5 9-6 6H8z" fill="#e5e5e5" />
        <path d="M10 5l5 5M24 4l-3 6M33 5l-4 6" stroke="#333" strokeWidth="2" />
        <path d="M1 10q21 6 42 0l-5 42q-16 7-32 0z" fill="#7f8386" opacity=".9" />
        <path d="M10 14l4 36M22 15v37M34 14l-4 36" stroke="#8f9396" strokeWidth="2" />
      </svg>
    </button>
  </div>
);

/* file names on the desktop that peek out between the window and the dock */
const DesktopLabels = () => (
  <div className="flex items-end gap-9 h-[5px] pl-[453px] overflow-hidden bg-black/50 text-[24px] leading-6 text-[#85858a]">
    <span>waleed_graduatio</span>
    <span>Canon IJ Scan</span>
    <span>codecanyon-6VDD</span>
    <span>untitled folder</span>
    <span>Screenshot_160(4)</span>
    <span className="ml-[260px]">clothyclothy</span>
    <span>Screenshot_160(4)</span>
  </div>
);

const App = () => (
  <div className="flex flex-col h-screen overflow-hidden bg-linear-to-r from-[#56729f] via-[#66707f] to-[#77767f] font-['Inter',sans-serif]">
    <MenuBar />
    <div className="flex flex-col flex-1 min-h-0 overflow-hidden rounded-[20px] rounded-t-none border-b-2 border-black bg-white">
      <div className="relative shrink-0 h-[223px] overflow-hidden border-t-2 border-[#4b4b4d] bg-black">
        <Starfield />
        <TabStrip />
        <Toolbar />
        <BookmarksBar />
      </div>
      <div className="flex flex-col flex-1 min-h-0 font-['Liberation_Sans',Arial,sans-serif]">
        <CourseHeader />
        <AssignmentBar />
        <div className="flex flex-1 min-h-0 bg-white">
          <QuestionList />
          <Exercise />
        </div>
        <ActionBar />
      </div>
    </div>
    <div className="shrink-0 h-24">
      <DesktopLabels />
      <DockShelf />
    </div>
  </div>
);

export default App;
